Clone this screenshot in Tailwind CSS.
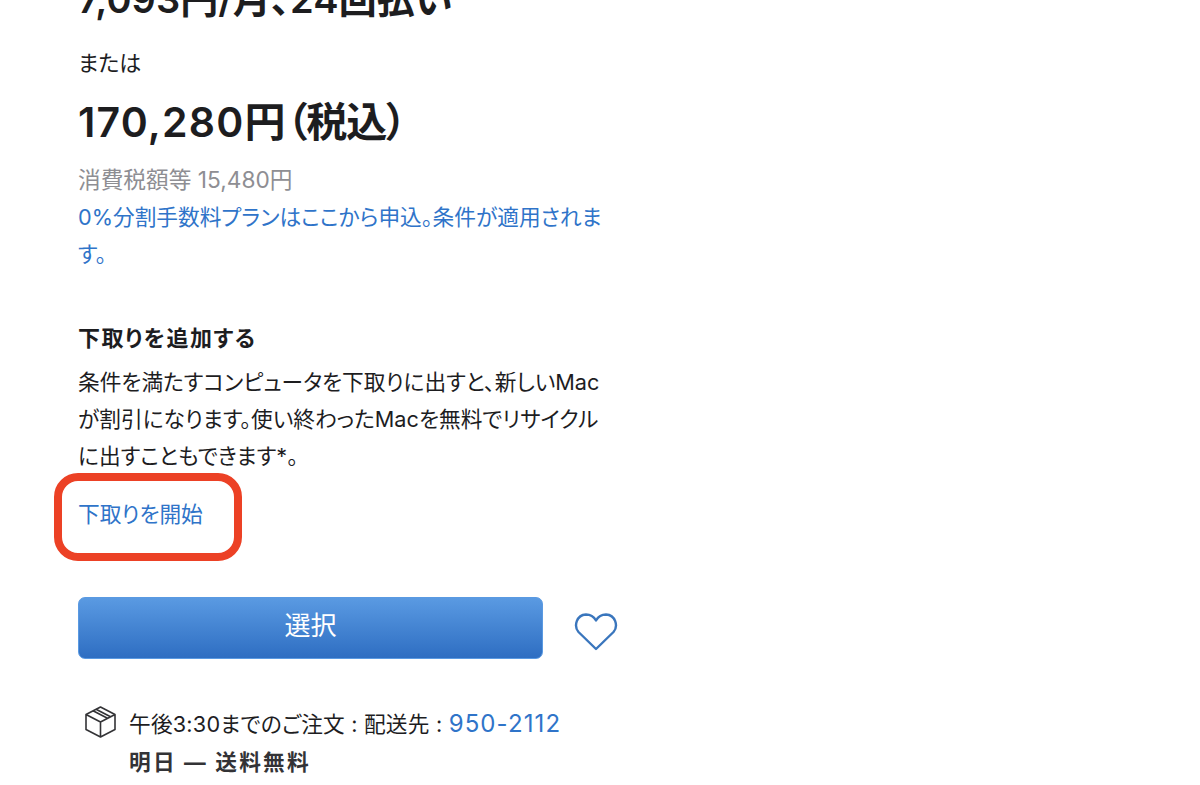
<!doctype html>
<html lang="ja"><head><meta charset="utf-8"><script src="https://cdn.jsdelivr.net/npm/@tailwindcss/browser@4"></script></head>
<body class="bg-white overflow-hidden">
<main class="relative h-[785px] w-[1200px] overflow-hidden pl-[78px] text-[#1d1d1f] font-['Inter','Noto_Sans_CJK_JP',sans-serif] [font-feature-settings:'palt']">
  <div class="mt-[-27px] h-[52px] whitespace-nowrap text-[38px] leading-[52px] font-semibold tracking-[0.1px]">7,093円/月、24回払い</div>
  <p class="mt-[22px] text-[22px] leading-[32px]">または</p>
  <div class="mt-[18px] whitespace-nowrap text-[41px] leading-[50px] font-semibold tracking-[1.2px]">170,280円<span class="tracking-[-1px]">（税込）</span></div>
  <p class="mt-[14px] text-[22.700px] leading-[37px] text-[#8e8e93]">消費税額等 15,480円</p>
  <p class="mt-[1px] w-[530px] text-[21.700px] leading-[37px] text-[#2f74c9]">0%分割手数料プランはここから申込。条件が適用されます。</p>
  <h2 class="mt-[47px] text-[22px] leading-[37px] font-bold tracking-[1.500px]">下取りを追加する</h2>
  <p class="mt-[7px] w-[530px] text-[21.700px] leading-[37px]">条件を満たすコンピュータを下取りに出すと、新しいMacが割引になります。使い終わったMacを無料でリサイクルに出すこともできます*。</p>
  <div class="relative mt-[21px] w-fit">
    <a class="block text-[21.700px] leading-[37px] text-[#2f74c9]">下取りを開始</a>
    <div class="absolute left-[-24px] top-[-23px] h-[88px] w-[188px] rounded-[24px] border-[8px] border-[#ec4125]"></div>
  </div>
  <div class="mt-[64px] flex items-center">
    <button class="h-[62px] w-[465px] rounded-[7px] border border-[#5a9ae2] bg-gradient-to-b from-[#5a9ae2] to-[#2e6ec2] pb-[6px] text-[26px] text-white">選択</button>
    <svg class="ml-[31px] mt-[7px]" width="44" height="40" viewBox="0 0 44 40" fill="none" stroke="#3a76bd" stroke-width="2.4" stroke-linejoin="round"><path d="M22 37 L4.500 20 C-0.500 14 2.500 3 12 2.500 C16.500 2.500 20 5 22 8.500 C24 5 27.500 2.500 32 2.500 C41.500 3 44.500 14 39.500 20 Z"/></svg>
  </div>
  <div class="mt-[46px] flex pl-[6px]">
    <svg class="mt-[0px]" width="33" height="34" viewBox="0 0 32 34" fill="none" stroke="#333336" stroke-width="1.6" stroke-linejoin="round"><path d="M16 2 L30.500 9.500 V24.500 L16 32 L1.500 24.500 V9.500 Z M1.500 9.500 L16 17 L30.500 9.500 M16 17 V32 M8.500 5.800 L23 13.300 M11.500 4.300 L26 11.800"/></svg>
    <div class="ml-[12px] text-[21.700px] leading-[38px] tracking-[0.2px] whitespace-nowrap">
      <p>午後3:30までのご注文 : 配送先 : <span class="text-[#2f74c9] text-[24px] tracking-[1.100px]">950-2112</span></p>
      <p class="font-bold text-[#333336] tracking-[2.200px]">明日 — 送料無料</p>
    </div>
  </div>
</main>
</body></html>
